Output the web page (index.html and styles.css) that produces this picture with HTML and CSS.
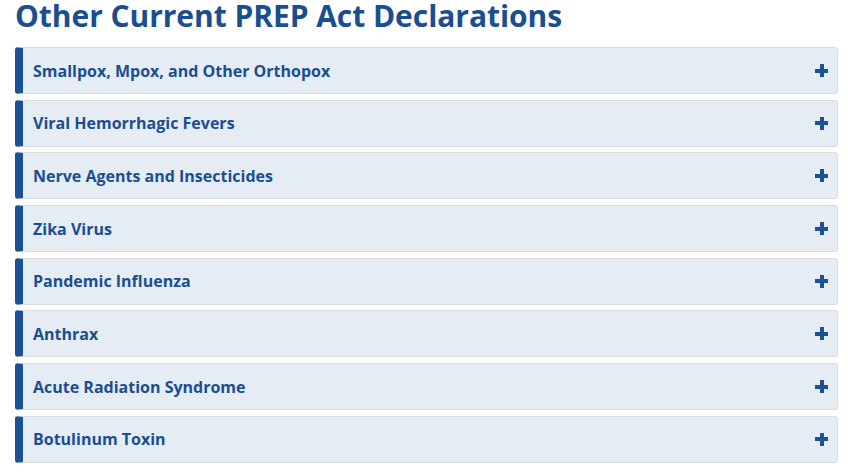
FILE: index.html
```html
<!DOCTYPE html>
<html lang="en">
<head>
    <meta charset="UTF-8">
    <title>Other Current PREP Act Declarations</title>
    <link rel="stylesheet" href="styles.css">
</head>
<body>
    <div class="section">
        <h2 class="section-title">Other Current PREP Act Declarations</h2>

        <!-- Accordion list -->
        <div class="accordion">
            <div class="panel"><span class="panel-title">Smallpox, Mpox, and Other Orthopox</span><span class="plus"></span></div>
            <div class="panel"><span class="panel-title">Viral Hemorrhagic Fevers</span><span class="plus"></span></div>
            <div class="panel"><span class="panel-title">Nerve Agents and Insecticides</span><span class="plus"></span></div>
            <div class="panel"><span class="panel-title">Zika Virus</span><span class="plus"></span></div>
            <div class="panel"><span class="panel-title">Pandemic Influenza</span><span class="plus"></span></div>
            <div class="panel"><span class="panel-title">Anthrax</span><span class="plus"></span></div>
            <div class="panel"><span class="panel-title">Acute Radiation Syndrome</span><span class="plus"></span></div>
            <div class="panel"><span class="panel-title">Botulinum Toxin</span><span class="plus"></span></div>
        </div>
    </div>
</body>
</html>
```

FILE: styles.css
```css
body {
    margin: 0;
    font-family: "Open Sans", sans-serif;
    background-color: #fff;
}

.section {
    padding: 0 10px 0 15px;
}

.section-title {
    margin: 0 0 7px;
    height: 40px;
    font-size: 30px;
    font-weight: 700;
    line-height: 32px;
    letter-spacing: -0.05px;
    color: #1a4f8f;
}

.accordion {
    display: flex;
    flex-direction: column;
    gap: 5.7px;
}

.panel {
    display: flex;
    align-items: center;
    justify-content: space-between;
    height: 47px;
    box-sizing: border-box;
    background-color: #e6ecf4;
    border: 1px solid #d9dde2;
    border-left: 8px solid #1c5193;
    border-radius: 3px;
    padding: 0 9px 0 10px;
}

.panel-title {
    font-size: 16px;
    font-weight: 700;
    color: #1a4f8f;
}

.plus {
    position: relative;
    width: 13px;
    height: 13px;
}

.plus::before,
.plus::after {
    content: "";
    position: absolute;
    background-color: #1c5193;
}

.plus::before {
    left: 0;
    top: 4.5px;
    width: 13px;
    height: 4px;
}

.plus::after {
    left: 4.5px;
    top: 0;
    width: 4px;
    height: 13px;
}
```
